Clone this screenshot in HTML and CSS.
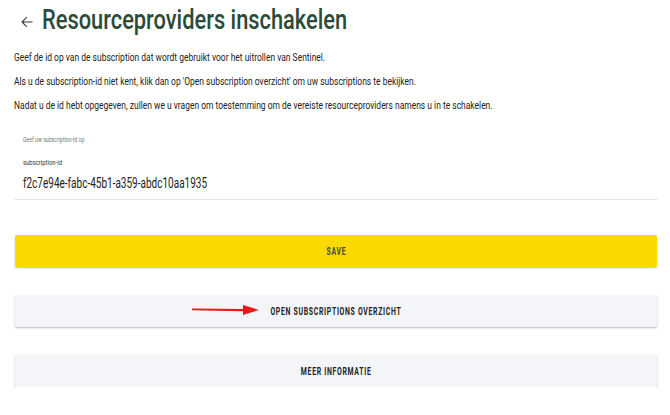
FILE: index.html
```html
<!DOCTYPE html>
<html lang="nl">
<head>
    <meta charset="UTF-8">
    <meta name="viewport" content="width=device-width, initial-scale=1.0">
    <title>Resourceproviders inschakelen</title>
    <link rel="stylesheet" href="styles.css">
</head>
<body>
    <div class="page">
        <header class="title-bar">
            <button class="back" aria-label="Terug">
                <svg width="12" height="12" viewBox="0 0 12 12">
                    <path d="M11.5 6H1M5.8 1.2L1 6L5.8 10.8" fill="none" stroke="#3a3a3a" stroke-width="1.1"/>
                </svg>
            </button>
            <h1><span class="narrow">Resourceproviders inschakelen</span></h1>
        </header>

        <p><span class="narrow">Geef de id op van de subscription dat wordt gebruikt voor het uitrollen van Sentinel.</span></p>
        <p><span class="narrow">Als u de subscription-id niet kent, klik dan op 'Open subscription overzicht' om uw subscriptions te bekijken.</span></p>
        <p><span class="narrow">Nadat u de id hebt opgegeven, zullen we u vragen om toestemming om de vereiste resourceproviders namens u in te schakelen.</span></p>

        <div class="field">
            <div class="hint"><span class="narrow">Geef uw subscription-id op</span></div>
            <label for="subid"><span class="narrow">subscription-id</span></label>
            <input id="subid" class="value" type="text" value="f2c7e94e-fabc-45b1-a359-abdc10aa1935">
        </div>

        <div class="actions">
            <button class="btn btn-save"><span class="narrow">Save</span></button>
            <div class="btn-wrap">
                <button class="btn"><span class="narrow">Open subscriptions overzicht</span></button>
                <svg class="pointer" width="68" height="12" viewBox="0 0 68 12">
                    <path d="M0 4.4L51 5.0L51 1L67 6L51 11L51 7.2L0 6.2Z" fill="#f01616"/>
                </svg>
            </div>
            <button class="btn"><span class="narrow">Meer informatie</span></button>
        </div>
    </div>
</body>
</html>
```

FILE: styles.css
```css
* {
    box-sizing: border-box;
}

body {
    margin: 0;
    background-color: #fff;
    font-family: Roboto, "Liberation Sans", sans-serif;
    color: #222;
    overflow: hidden;
}

/* condensed look: the screen uses a narrow typeface */
.narrow {
    display: inline-block;
    white-space: nowrap;
    transform: scaleX(0.74);
    transform-origin: left center;
}

.page {
    padding: 0 12px 0 14px;
}

.title-bar {
    display: flex;
    align-items: flex-start;
    height: 40px;
    margin-bottom: 6px;
}

.back {
    display: flex;
    align-items: center;
    justify-content: center;
    width: 24px;
    height: 24px;
    margin: 10px 0 0 1px;
    padding: 0;
    border: none;
    background: none;
}

h1 {
    margin: 0 0 0 3px;
    font-size: 28px;
    line-height: 40px;
    font-weight: 500;
    color: #2c4a38;
}

h1 .narrow {
    transform: scaleX(0.78);
}

p {
    margin: 0;
    font-size: 11px;
    line-height: 24px;
    color: #222;
}

p .narrow {
    transform: scaleX(0.77);
}

.field {
    margin-top: 14px;
    padding: 3px 9px 7px;
    border-bottom: 1px solid #e4e4e4;
    overflow: hidden;
}

.hint {
    font-size: 7px;
    line-height: 10px;
    color: #6d7a72;
}

label {
    display: block;
    margin-top: 13px;
    font-size: 8px;
    line-height: 10px;
    color: #333;
}

.value {
    display: block;
    width: 140%;
    margin-top: 6px;
    padding: 0;
    border: none;
    outline: none;
    background: none;
    font-family: inherit;
    font-size: 14px;
    line-height: 18px;
    color: #222;
    transform: scaleX(0.715);
    transform-origin: left center;
}

.actions {
    display: flex;
    flex-direction: column;
    gap: 28px;
    padding: 35px 1px 0;
}

.btn {
    display: block;
    width: 100%;
    height: 32px;
    padding: 0;
    border: none;
    border-radius: 2px;
    background-color: #f4f5f8;
    box-shadow: 0 1px 2px rgba(0, 0, 0, 0.28);
    font-family: inherit;
    font-size: 10px;
    font-weight: 700;
    letter-spacing: 1px;
    text-transform: uppercase;
    color: #222;
}

.btn .narrow {
    transform: scaleX(0.69);
    transform-origin: center;
}

.btn-save {
    background-color: #fbd900;
    color: #4b4a2c;
}

.btn-wrap {
    position: relative;
}

.pointer {
    position: absolute;
    left: 177px;
    top: 9px;
}
```
